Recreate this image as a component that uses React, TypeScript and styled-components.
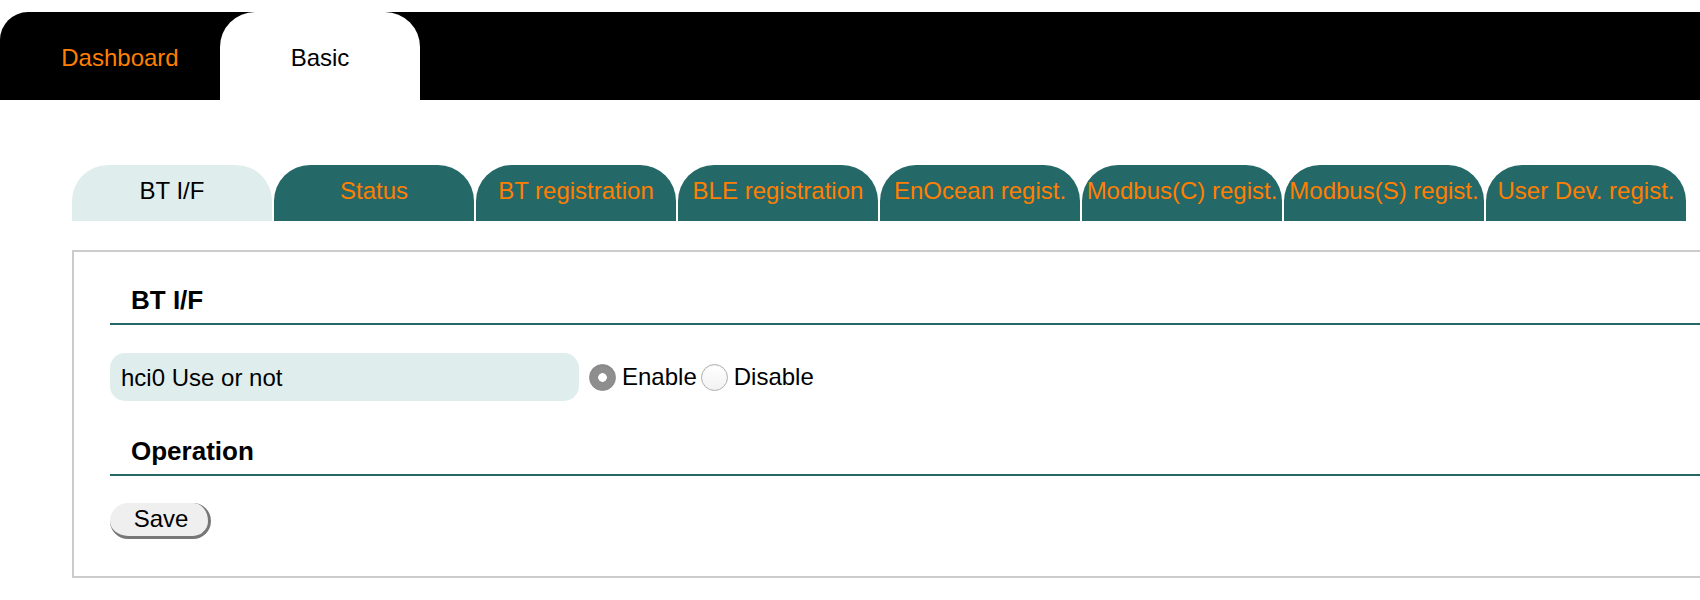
import React, { useState } from "react";
import styled, { createGlobalStyle } from "styled-components";

const Global = createGlobalStyle`
  html, body {
    margin: 0;
    padding: 0;
    overflow: hidden;
    background: #ffffff;
  }
  body {
    font-family: "Liberation Sans", Arial, Helvetica, sans-serif;
    color: #000;
  }
  * { box-sizing: border-box; }
`;

const ORANGE = "#ff7f00";
const TEAL = "#256868";
const PALE = "#dfeeed";

const Page = styled.div`
  padding-top: 12px;
  width: 1700px;
`;

const NavBar = styled.nav`
  display: flex;
  height: 88px;
  background: #000;
  border-top-left-radius: 28px;
  padding-left: 20px;
`;

const NavTab = styled.a<{ $active?: boolean }>`
  display: flex;
  align-items: center;
  justify-content: center;
  width: 200px;
  height: 88px;
  padding-top: 3px;
  font-size: 24px;
  text-decoration: none;
  cursor: pointer;
  color: ${(p) => (p.$active ? "#000" : ORANGE)};
  background: ${(p) => (p.$active ? "#fff" : "transparent")};
  border-radius: 35px 35px 0 0;
`;

const Main = styled.main`
  padding-left: 72px;
  padding-top: 65px;
  width: 1800px;
`;

const SubTabs = styled.div`
  display: flex;
  gap: 2px;
`;

const SubTab = styled.a<{ $active?: boolean }>`
  display: block;
  width: 200px;
  height: 56px;
  padding-top: 12px;
  line-height: 28px;
  font-size: 24px;
  text-align: center;
  white-space: nowrap;
  text-decoration: none;
  cursor: pointer;
  border-radius: 36px 36px 0 0;
  color: ${(p) => (p.$active ? "#000" : ORANGE)};
  background: ${(p) => (p.$active ? PALE : TEAL)};
`;

const Panel = styled.section`
  margin-top: 29px;
  border: 2px solid #cccccc;
  padding: 33px 0 37px 36px;
  width: 1700px;
`;

const SectionHeader = styled.h2<{ $gap?: number }>`
  margin: ${(p) => p.$gap ?? 0}px 0 0 0;
  padding: 0 0 8px 21px;
  font-size: 26px;
  line-height: 30px;
  font-weight: bold;
  border-bottom: 2px solid ${TEAL};
`;

const FieldRow = styled.div`
  display: flex;
  align-items: center;
  margin-top: 28px;
`;

const FieldLabel = styled.div`
  width: 469px;
  height: 48px;
  display: flex;
  align-items: center;
  padding-left: 11px;
  padding-top: 1px;
  background: ${PALE};
  border-radius: 15px;
  font-size: 24px;
`;

const RadioGroup = styled.div`
  display: flex;
  align-items: center;
  margin-left: 10px;
  padding-top: 0;
  gap: 4px;
`;

const RadioLabel = styled.label`
  display: flex;
  align-items: center;
  gap: 6px;
  font-size: 24px;
  cursor: pointer;
`;

const Radio = styled.input`
  appearance: none;
  -webkit-appearance: none;
  margin: 0;
  width: 27px;
  height: 27px;
  border-radius: 50%;
  border: 1px solid #b0b0b0;
  background: linear-gradient(#ffffff, #f2f2f2);
  box-shadow: inset 0 1px 1px rgba(0, 0, 0, 0.06);
  cursor: pointer;

  &:checked {
    border-color: #8a8a8a;
    background: radial-gradient(circle, #ffffff 0 4px, #8e8e8e 4.6px);
  }
`;

const ButtonRow = styled.div`
  margin-top: 27px;
`;

const SaveButton = styled.button`
  width: 101px;
  height: 36px;
  padding: 0 0 1px 4px;
  font-family: inherit;
  font-size: 24px;
  color: #000;
  background: #efefef;
  border: none;
  border-right: 3px solid #777777;
  border-bottom: 3px solid #777777;
  border-radius: 18px;
  cursor: pointer;
`;

const subTabs = [
  "BT I/F",
  "Status",
  "BT registration",
  "BLE registration",
  "EnOcean regist.",
  "Modbus(C) regist.",
  "Modbus(S) regist.",
  "User Dev. regist.",
];

export default function App() {
  const [enabled, setEnabled] = useState(true);
  return (
    <Page>
      <Global />
      <NavBar>
        <NavTab>Dashboard</NavTab>
        <NavTab $active>Basic</NavTab>
      </NavBar>
      <Main>
        <SubTabs>
          {subTabs.map((t, i) => (
            <SubTab key={t} $active={i === 0}>
              {t}
            </SubTab>
          ))}
        </SubTabs>
        <Panel>
          <SectionHeader>BT I/F</SectionHeader>
          <FieldRow>
            <FieldLabel>hci0 Use or not</FieldLabel>
            <RadioGroup>
              <RadioLabel>
                <Radio
                  type="radio"
                  name="hci0"
                  checked={enabled}
                  onChange={() => setEnabled(true)}
                />
                Enable
              </RadioLabel>
              <RadioLabel>
                <Radio
                  type="radio"
                  name="hci0"
                  checked={!enabled}
                  onChange={() => setEnabled(false)}
                />
                Disable
              </RadioLabel>
            </RadioGroup>
          </FieldRow>
          <SectionHeader $gap={35}>Operation</SectionHeader>
          <ButtonRow>
            <SaveButton type="button">Save</SaveButton>
          </ButtonRow>
        </Panel>
      </Main>
    </Page>
  );
}
